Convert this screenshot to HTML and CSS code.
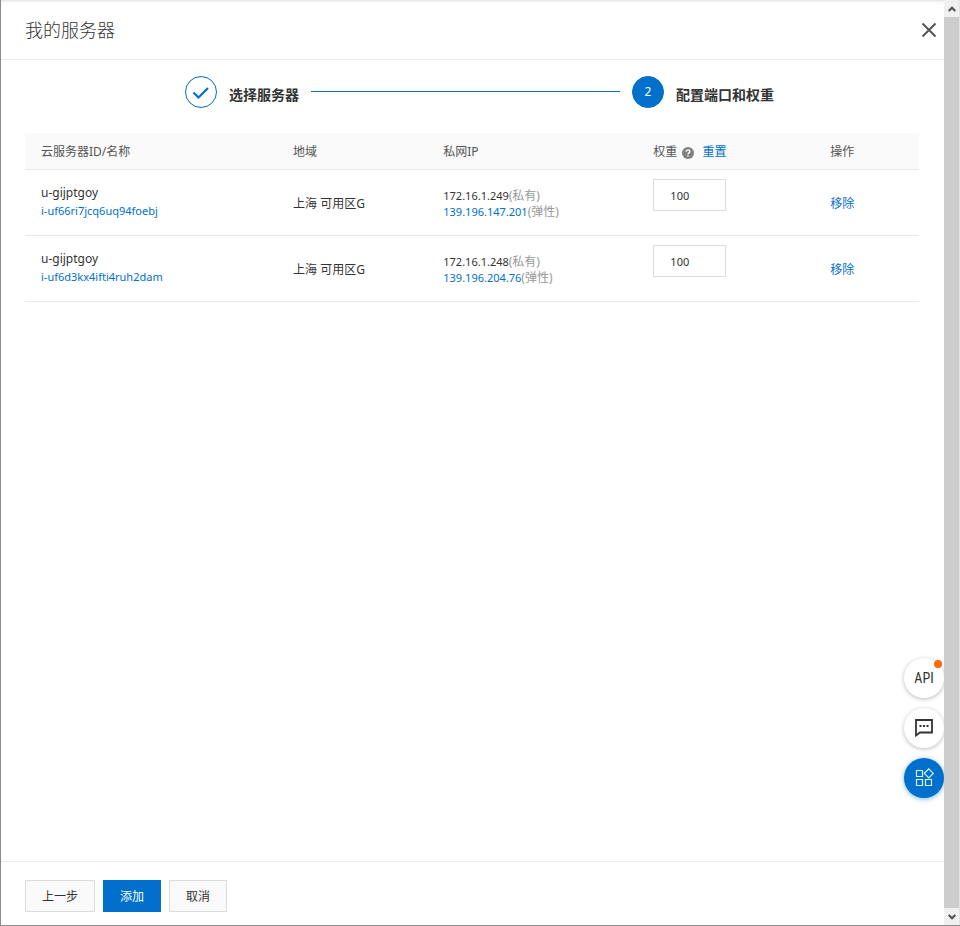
FILE: index.html
```html
<!DOCTYPE html>
<html lang="zh-CN">
<head>
<meta charset="utf-8">
<meta name="viewport" content="width=device-width, initial-scale=1">
<title>我的服务器</title>
<link rel="stylesheet" href="styles.css">
</head>
<body>
<div class="window">
  <main class="panel">
    <header class="panel-header">
      <h1>我的服务器</h1>
      <button class="close" type="button" aria-label="关闭">
        <svg width="16" height="16" viewBox="0 0 16 16"><path d="M1.500 1.500l13 13M14.500 1.500l-13 13" fill="none" stroke="#555" stroke-width="2"/></svg>
      </button>
    </header>

    <section class="content">
      <ol class="steps">
        <li class="step">
          <span class="step-mark">
            <svg width="18" height="16" viewBox="0 0 18 16"><path d="M1.500 8.500l5 5L16 4" fill="none" stroke="#0070cc" stroke-width="2.200"/></svg>
          </span>
          <span class="step-title">选择服务器</span>
        </li>
        <li class="step-line" aria-hidden="true"></li>
        <li class="step">
          <span class="step-mark step-mark-current">2</span>
          <span class="step-title">配置端口和权重</span>
        </li>
      </ol>

      <table class="servers">
        <colgroup>
          <col class="col-name"><col class="col-region"><col class="col-ip"><col class="col-weight"><col class="col-action">
        </colgroup>
        <thead>
          <tr>
            <th>云服务器ID/名称</th>
            <th>地域</th>
            <th>私网IP</th>
            <th>
              <div class="weight-head">
                <span>权重</span>
                <svg class="help" width="12" height="12" viewBox="0 0 12 12"><circle cx="6" cy="6" r="6" fill="#808080"/><path d="M4.100 4.800c0-2.400 3.800-2.400 3.800-.2C7.900 5.900 6 5.800 6 7.300" fill="none" stroke="#fff" stroke-width="1.300"/><rect x="5.300" y="8.200" width="1.400" height="1.400" fill="#fff"/></svg>
                <a href="#">重置</a>
              </div>
            </th>
            <th>操作</th>
          </tr>
        </thead>
        <tbody>
          <tr>
            <td class="name">u-gijptgoy<br><a class="compact" href="#">i-uf66ri7jcq6uq94foebj</a></td>
            <td>上海 可用区G</td>
            <td class="ip"><span class="compact">172.16.1.249</span><span class="kind">(私有)</span><br><a class="compact" href="#">139.196.147.201</a><span class="kind">(弹性)</span></td>
            <td class="weight"><input class="compact" type="text" value="100" aria-label="权重"></td>
            <td><a href="#">移除</a></td>
          </tr>
          <tr>
            <td class="name">u-gijptgoy<br><a class="compact" href="#">i-uf6d3kx4ifti4ruh2dam</a></td>
            <td>上海 可用区G</td>
            <td class="ip"><span class="compact">172.16.1.248</span><span class="kind">(私有)</span><br><a class="compact" href="#">139.196.204.76</a><span class="kind">(弹性)</span></td>
            <td class="weight"><input class="compact" type="text" value="100" aria-label="权重"></td>
            <td><a href="#">移除</a></td>
          </tr>
        </tbody>
      </table>
    </section>

    <footer class="panel-footer">
      <button class="btn" type="button">上一步</button>
      <button class="btn btn-primary" type="button">添加</button>
      <button class="btn" type="button">取消</button>
    </footer>

    <nav class="float-tools">
      <button class="tool tool-text" type="button">API<span class="dot"></span></button>
      <button class="tool" type="button" aria-label="反馈">
        <svg width="20" height="20" viewBox="0 0 20 20"><path d="M2 2h16v12.500H6l-4 3z" fill="none" stroke="#333" stroke-width="1.800"/><path d="M5.500 8h2M9 8h2M12.500 8h2" stroke="#333" stroke-width="2"/></svg>
      </button>
      <button class="tool tool-primary" type="button" aria-label="应用">
        <svg width="20" height="20" viewBox="0 0 20 20"><path d="M2.500 2.500h6v6h-6zM2.500 11.500h6v6h-6zM11.500 11.500h6v6h-6zM14.800 .8l4.500 4.500l-4.500 4.500l-4.500-4.500z" fill="none" stroke="#d8f4ff" stroke-width="1.200"/></svg>
      </button>
    </nav>
  </main>

  <div class="scrollbar" aria-hidden="true">
    <span class="arrow"><svg width="8" height="6" viewBox="0 0 8 6"><path d="M.7 5L4 1.700L7.300 5" fill="none" stroke="#505050" stroke-width="2"/></svg></span>
    <span class="thumb"></span>
    <span class="arrow"><svg width="8" height="6" viewBox="0 0 8 6"><path d="M.7 1L4 4.300L7.300 1" fill="none" stroke="#505050" stroke-width="2"/></svg></span>
  </div>
</div>
</body>
</html>
```
FILE: styles.css
```css
* {
  box-sizing: border-box;
}

body {
  margin: 0;
  background: #fff;
  color: #333;
  font: 12px/18px "Noto Sans", "Noto Sans CJK SC", sans-serif;
}

a {
  color: #0070cc;
  text-decoration: none;
}

button,
input {
  font: inherit;
  color: inherit;
}

.window {
  display: flex;
  height: 100vh;
  border-left: 1px solid #8c8c8c;
  border-bottom: 1px solid #8c8c8c;
}

.panel {
  position: relative;
  flex: 1;
  min-width: 0;
  display: flex;
  flex-direction: column;
  box-shadow: inset 0 3px 3px -2px #ddd;
}

.panel-header {
  display: flex;
  align-items: center;
  justify-content: space-between;
  height: 60px;
  padding: 0 7px 0 24px;
  border-bottom: 1px solid #ebebeb;
}

h1 {
  margin: 0;
  font-size: 18px;
  line-height: 24px;
  font-weight: 300;
}

.close {
  display: flex;
  padding: 0;
  border: 0;
  background: none;
}

.content {
  flex: 1;
  padding: 16px 25px 16px 24px;
}

.steps {
  display: flex;
  gap: 12px;
  margin: 0 145px 25px 160px;
  padding: 0;
  list-style: none;
}

.step {
  display: flex;
  gap: 12px;
}

.step-mark {
  display: flex;
  align-items: center;
  justify-content: center;
  width: 32px;
  height: 32px;
  border: 1px solid #0070cc;
  border-radius: 50%;
}

.step-mark-current {
  background: #0070cc;
  color: #fff;
}

.step-title {
  padding-top: 9px;
  font-size: 14px;
  line-height: 20px;
  font-weight: 700;
}

.step-line {
  flex: 1;
  height: 1px;
  margin-top: 15px;
  background: #0b78a8;
}

.servers {
  width: 100%;
  table-layout: fixed;
  border-collapse: separate;
  border-spacing: 0;
}

.col-name { width: 28.2%; }
.col-region { width: 16.8%; }
.col-ip { width: 23.5%; }
.col-weight { width: 19.8%; }

th,
td {
  padding: 2px 16px 0;
  border-bottom: 1px solid #e8e8e8;
  text-align: left;
}

th {
  height: 37px;
  background: #fafafa;
  color: #555;
  font-weight: 400;
}

.weight-head {
  display: flex;
  align-items: center;
}

.help {
  margin: 2px 8px 0 5px;
}

.compact {
  font-size: 11px;
}

.name {
  padding-top: 0;
  padding-bottom: 2px;
}

.ip {
  line-height: 16px;
}

.kind {
  color: #999;
}

.weight {
  height: 66px;
  padding-top: 9px;
  vertical-align: top;
}

.weight input {
  display: block;
  width: 73px;
  height: 32px;
  padding: 0 16px;
  border: 1px solid #ddd;
  background: #fff;
}

.panel-footer {
  display: flex;
  gap: 8px;
  height: 64px;
  padding: 18px 24px 0;
  border-top: 1px solid #ebebeb;
}

.btn {
  height: 32px;
  padding: 2px 16px 0;
  border: 1px solid #ddd;
  background: #fafafa;
}

.btn-primary {
  border-color: #0070cc;
  background: #0070cc;
  color: #fff;
}

.float-tools {
  position: absolute;
  right: 0;
  bottom: 127px;
  display: flex;
  flex-direction: column;
  gap: 10px;
}

.tool {
  position: relative;
  display: flex;
  align-items: center;
  justify-content: center;
  width: 40px;
  height: 40px;
  padding: 0;
  border: 0;
  border-radius: 50%;
  background: #fff;
  box-shadow: 0 1px 4px rgba(0, 0, 0, 0.28);
}

.tool-text {
  font-family: "Liberation Sans Narrow", "Roboto Condensed", Roboto, sans-serif;
  font-size: 14px;
}

.tool-primary {
  background: #0070cc;
  box-shadow: 0 1px 5px rgba(0, 112, 204, 0.5);
}

.dot {
  position: absolute;
  top: 2px;
  right: 2px;
  width: 8px;
  height: 8px;
  border-radius: 50%;
  background: #ff6a00;
}

.scrollbar {
  position: relative;
  display: flex;
  flex-direction: column;
  width: 16px;
  border-right: 1px solid #e4e4e4;
  background: #f0f0f0;
}

.arrow {
  display: flex;
  align-items: center;
  justify-content: center;
  height: 17px;
}

.thumb {
  flex: 1;
  background: #cdcdcd;
}
```
